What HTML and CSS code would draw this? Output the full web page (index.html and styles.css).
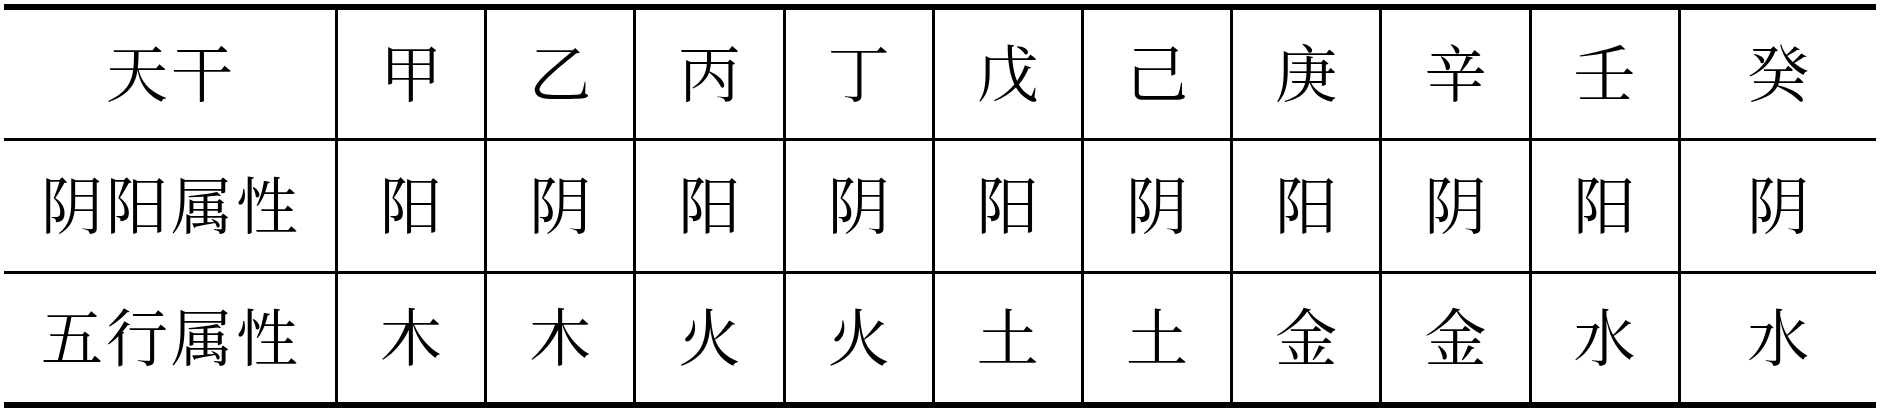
FILE: index.html
```html
<!DOCTYPE html>
<html lang="zh">
<head>
<meta charset="utf-8">
<title>天干</title>
<link rel="stylesheet" href="styles.css">
</head>
<body>
<div class="wrap">
  <div class="table">
    <div class="row first">
      <div class="cell head">天干</div>
      <div class="cell">甲</div><div class="cell">乙</div><div class="cell">丙</div><div class="cell">丁</div><div class="cell">戊</div><div class="cell">己</div><div class="cell">庚</div><div class="cell">辛</div><div class="cell">壬</div><div class="cell">癸</div>
    </div>
    <div class="row mid">
      <div class="cell head">阴阳属性</div>
      <div class="cell">阳</div><div class="cell">阴</div><div class="cell">阳</div><div class="cell">阴</div><div class="cell">阳</div><div class="cell">阴</div><div class="cell">阳</div><div class="cell">阴</div><div class="cell">阳</div><div class="cell">阴</div>
    </div>
    <div class="row last">
      <div class="cell head">五行属性</div>
      <div class="cell">木</div><div class="cell">木</div><div class="cell">火</div><div class="cell">火</div><div class="cell">土</div><div class="cell">土</div><div class="cell">金</div><div class="cell">金</div><div class="cell">水</div><div class="cell">水</div>
    </div>
  </div>
</div>
</body>
</html>
```

FILE: styles.css
```css
html, body {
  margin: 0;
  padding: 0;
  background: #fff;
}
.wrap {
  padding: 4px 7px 4px 4px;
}
.table {
  width: 1872px;
  border-top: 6px solid #000;
  border-bottom: 6px solid #000;
  font-family: "Noto Serif CJK SC", "Noto Sans CJK SC", serif;
  font-size: 62px;
  color: #000;
}
.row {
  display: grid;
  grid-template-columns: 331px repeat(9, 149.2px) 1fr;
}
.row.first { height: 128px; }
.row.mid { height: 133px; border-top: 3px solid #000; box-sizing: border-box; }
.row.last { height: 131px; border-top: 3px solid #000; box-sizing: border-box; }
.cell {
  display: flex;
  align-items: center;
  justify-content: center;
  border-left: 3px solid #000;
  line-height: 1;
  padding-bottom: 6px;
  box-sizing: border-box;
}
.cell.head {
  border-left: none;
  letter-spacing: 3px;
  padding-left: 3px;
}
```
